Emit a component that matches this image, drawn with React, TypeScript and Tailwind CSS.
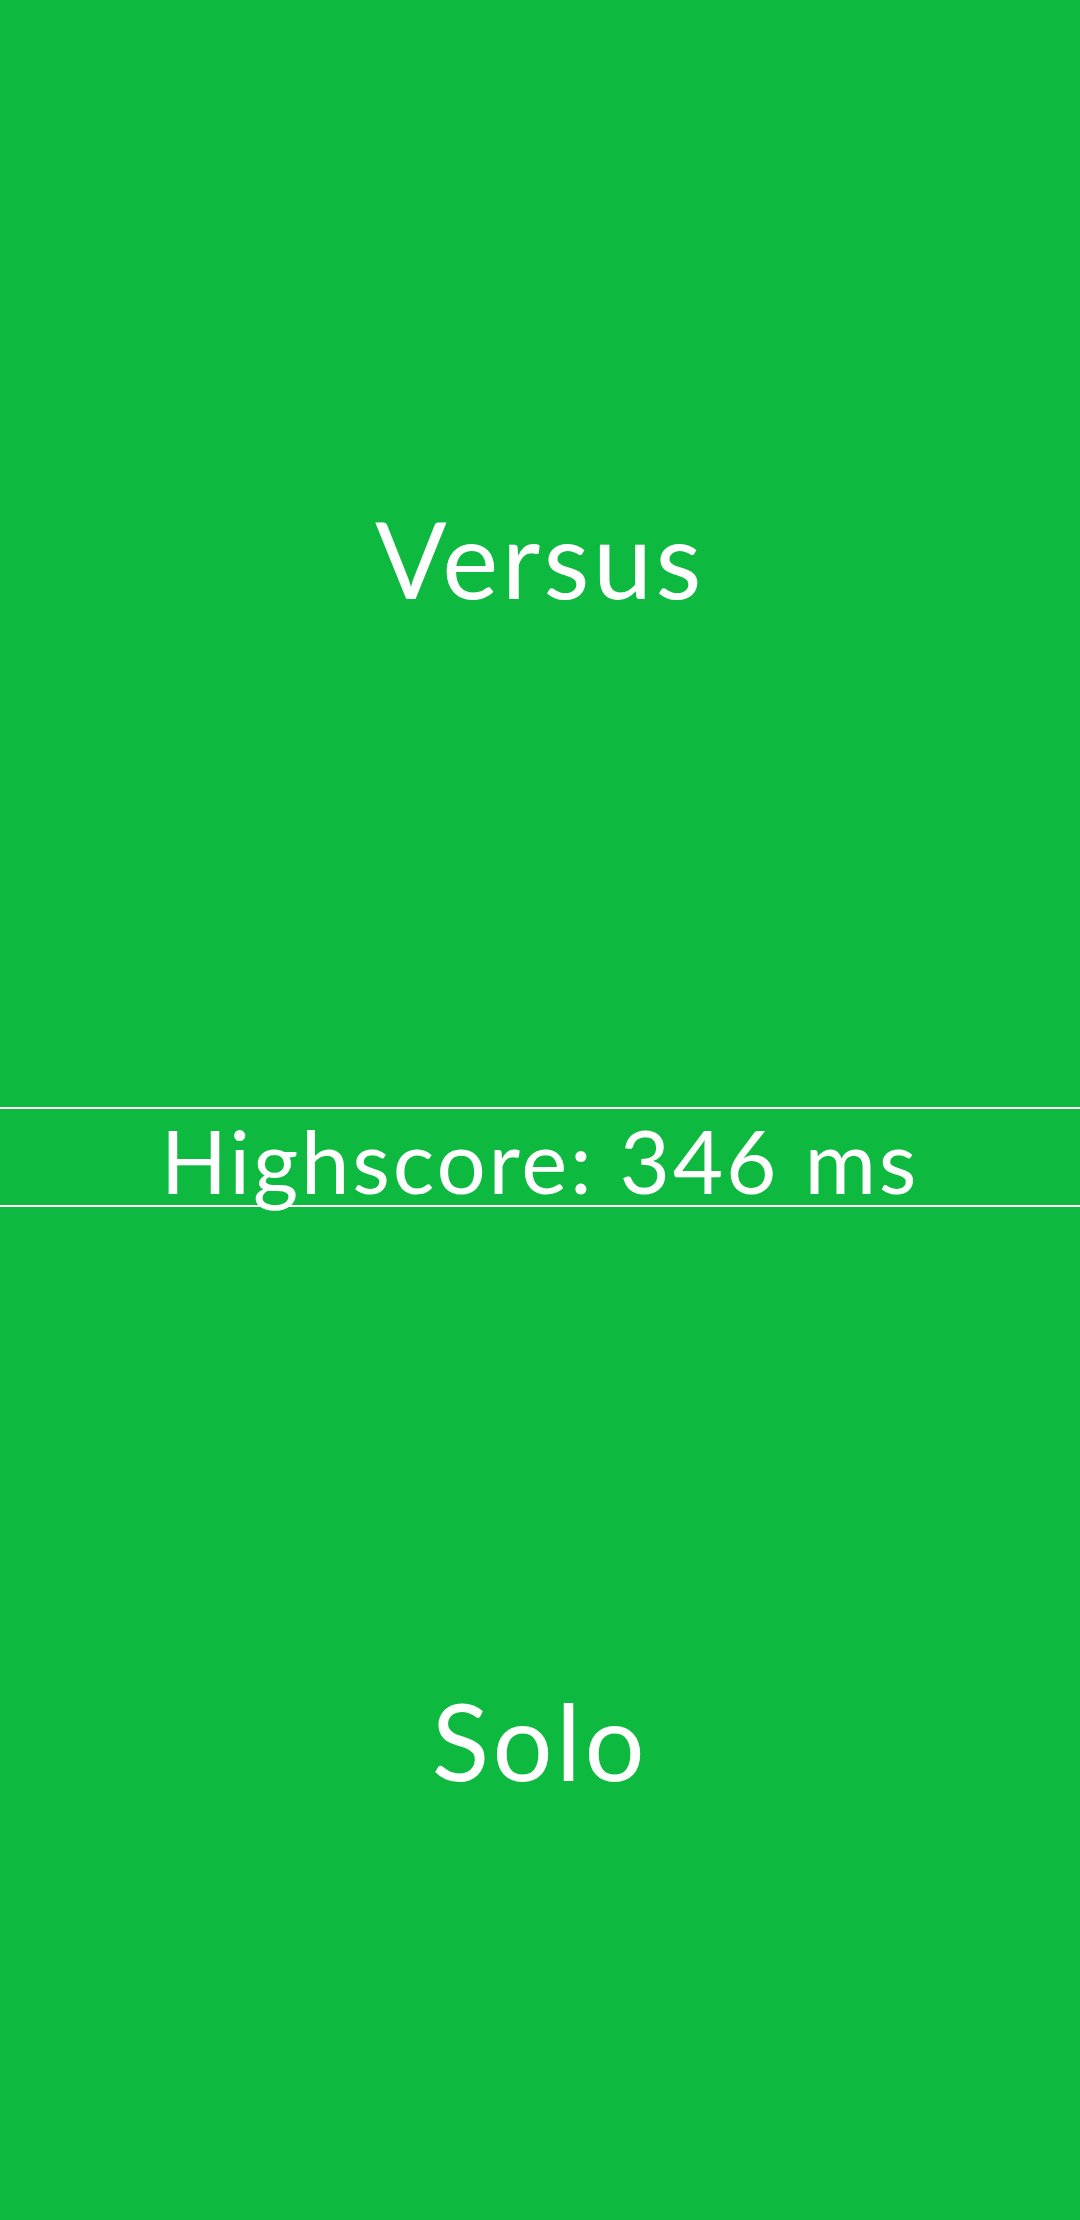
const App = () => {
  return (
    <div
      className="flex h-[2220px] w-[1080px] flex-col bg-[#0eb940] text-white"
      style={{ fontFamily: 'Lato, "Noto Sans", sans-serif' }}
    >
      <button className="flex h-[1107px] items-center justify-center pt-[8px] text-[106px] leading-none tracking-[3.5px]">
        Versus
      </button>
      <div className="flex h-[100px] items-center justify-center border-y-2 border-white pt-[6px] text-[87px] leading-none tracking-[2.8px]">
        Highscore: 346 ms
      </div>
      <button className="flex flex-1 items-center justify-center pt-[53px] text-[106px] leading-none tracking-[3.5px]">
        Solo
      </button>
    </div>
  );
};

export default App;
